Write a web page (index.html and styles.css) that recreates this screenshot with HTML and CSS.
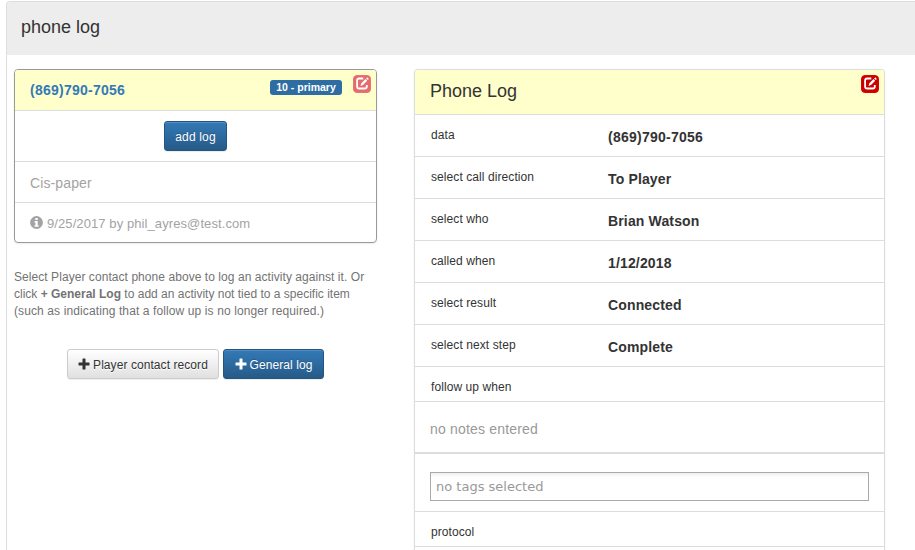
FILE: index.html
```html
<!DOCTYPE html>
<html lang="en">
<head>
<meta charset="utf-8">
<title>phone log</title>
<link rel="stylesheet" href="styles.css">
</head>
<body>
<svg class="defs" width="0" height="0" aria-hidden="true">
  <symbol id="edit" viewBox="0 0 13 13">
    <path d="M7.3 1.5H3.2Q1.1 1.5 1.1 3.6V9.4Q1.1 11.5 3.2 11.5H8.7Q10.8 11.5 10.8 9.4V8" fill="none" stroke="#fff" stroke-width="1.8"/>
    <path d="M4.5 9 5.3 6.3 9.5 2 11.2 3.7 7 8ZM10.1 1.4 10.8.7Q11.3.3 11.8.8L12.4 1.4Q12.8 1.9 12.4 2.4L11.8 3.1Z" fill="#fff"/>
  </symbol>
  <symbol id="plus" viewBox="0 0 12 12">
    <path d="M4.5 1Q4.5.5 5 .5H7Q7.5.5 7.5 1V4.5H11Q11.5 4.5 11.5 5V7Q11.5 7.5 11 7.5H7.5V11Q7.5 11.5 7 11.5H5Q4.5 11.5 4.5 11V7.5H1Q.5 7.5.5 7V5Q.5 4.5 1 4.5H4.5Z" fill="currentColor"/>
  </symbol>
</svg>
<section class="page-panel">
  <header class="page-head"><h1>phone log</h1></header>
  <div class="columns">
    <div class="left">
      <article class="card contact">
        <div class="card-head">
          <a class="phone">(869)790-7056</a>
          <span class="rank">10 - primary</span>
          <span class="edit faded"><svg width="13" height="13"><use href="#edit"/></svg></span>
        </div>
        <div class="item action"><button class="btn primary add"><span>add log</span></button></div>
        <div class="item source"><span>Cis-paper</span></div>
        <div class="item meta">
          <svg width="13" height="13" viewBox="0 0 13 13"><circle cx="6.5" cy="6.5" r="6.4" fill="#a3a3a3"/><path d="M5.3 2H7.7V4H5.3ZM4.5 5H7.700V9.300H8.600V10.700H4.500V9.300H5.400V6.400H4.500Z" fill="#fff"/></svg>
          <span>9/25/2017 by phil_ayres@test.com</span>
        </div>
      </article>
      <p class="help"><span class="l1">Select Player contact phone above to log an activity against it. Or</span><br><span class="l2">click <b>+ General Log</b> to add an activity not tied to a specific item</span><br><span class="l3">(such as indicating that a follow up is no longer required.)</span></p>
      <div class="buttons">
        <button class="btn plain record"><svg width="12" height="12"><use href="#plus"/></svg><span>Player contact record</span></button>
        <button class="btn primary general"><svg width="12" height="12"><use href="#plus"/></svg><span>General log</span></button>
      </div>
    </div>
    <article class="card log">
      <div class="card-head">
        <h2>Phone Log</h2>
        <span class="edit"><svg width="13" height="13"><use href="#edit"/></svg></span>
      </div>
      <div class="row"><span class="key">data</span><b class="number">(869)790-7056</b></div>
      <div class="row"><span class="key">select call direction</span><b>To Player</b></div>
      <div class="row"><span class="key">select who</span><b>Brian Watson</b></div>
      <div class="row"><span class="key">called when</span><b>1/12/2018</b></div>
      <div class="row"><span class="key">select result</span><b>Connected</b></div>
      <div class="row"><span class="key">select next step</span><b>Complete</b></div>
      <div class="row short"><span class="key">follow up when</span></div>
      <div class="notes"><span>no notes entered</span></div>
      <div class="tags"><div class="tag-box"><span>no tags selected</span></div></div>
      <div class="row short"><span class="key">protocol</span></div>
    </article>
  </div>
</section>
</body>
</html>
```
FILE: styles.css
```css
* { box-sizing: border-box; }
body {
  margin: 0;
  height: 550px;
  overflow: hidden;
  background: #fff;
  color: #333;
  font: 14px/20px "Liberation Sans", Arial, sans-serif;
}
.defs { display: block; }
.page-panel {
  margin: 1px 0 0 6px;
  height: 549px;
  border: 1px solid #ddd;
  border-width: 1px 0 0 1px;
  border-radius: 4px 0 0;
}
.page-head { height: 53px; padding: 15px 14px; background: #ededed; border-radius: 3px 0 0; }
h1, h2 { margin: 0; font-size: 18px; line-height: 20px; font-weight: 400; }
.columns { display: flex; align-items: flex-start; padding: 14px 0 0 7px; }
.left { width: 363px; margin-right: 37px; }
.card {
  border: 1px solid #ddd;
  border-radius: 4px;
  box-shadow: 0 1px 2px rgba(0, 0, 0, .08);
}
.card-head {
  display: flex;
  align-items: flex-start;
  background: #ffc;
  border-bottom: 1px solid #ddd;
  border-radius: 3px 3px 0 0;
}
.contact { height: 174px; border-color: #999; }
.contact .card-head { height: 41px; padding: 5px 5px 0 15px; }
.phone { margin-top: 5px; color: #337ab7; font-weight: 700; letter-spacing: .25px; }
.rank {
  width: 72px;
  height: 15px;
  margin: 5px 11px 0 auto;
  border-radius: 3px;
  background: #2e6da4;
  color: #fff;
  font-size: 10.5px;
  font-weight: 700;
  line-height: 15px;
  text-align: center;
}
.edit {
  display: flex;
  align-items: center;
  justify-content: center;
  width: 18px;
  height: 18px;
  border: 1px solid #e00000;
  border-radius: 4px;
  background: #c90000;
}
.edit svg { margin-bottom: 1px; }
.edit.faded { background: #e46c6c; border-color: #e97272; }
.item { display: flex; align-items: center; height: 41px; padding: 0 15px; border-bottom: 1px solid #ddd; color: #a3a3a3; }
.item.action { height: 51px; justify-content: center; }
.item.source { padding-top: 2px; letter-spacing: .12px; }
.item.meta { height: 39px; border: 0; gap: 4px; font-size: 13px; letter-spacing: .09px; }
.item.meta span { padding-top: 2px; }
.btn {
  display: flex;
  align-items: center;
  justify-content: center;
  gap: 4px;
  height: 30px;
  padding: 0;
  border: 1px solid #245580;
  border-radius: 3px;
  font: 12px/18px "Liberation Sans", Arial, sans-serif;
  box-shadow: inset 0 1px 0 rgba(255, 255, 255, .15), 0 1px 1px rgba(0, 0, 0, .075);
}
.btn span { padding-top: 2px; letter-spacing: .07px; }
.btn.primary { color: #fff; background: linear-gradient(#337ab7, #265a88); text-shadow: 0 -1px 0 rgba(0, 0, 0, .2); }
.btn.plain { color: #333; background: linear-gradient(#fff, #e0e0e0); border-color: #ccc; text-shadow: 0 1px 0 #fff; }
.btn.record, .btn.general { gap: 3px; }
.add { width: 63px; }
.add span { letter-spacing: .15px; }
.help { margin: 26px 0 29px; color: #737373; font-size: 12px; line-height: 17px; white-space: nowrap; }
.l1 { letter-spacing: .06px; }
.l2 { letter-spacing: -.02px; }
.l3 { letter-spacing: .11px; }
.l2 { letter-spacing: 0; }
.buttons { display: flex; gap: 4px; padding-left: 53px; }
.record { width: 152px; }
.general { width: 101px; }
.log { width: 471px; height: 481px; border-bottom: 0; border-radius: 4px 4px 0 0; }
.log .card-head { height: 45px; padding: 5px 5px 0 15px; justify-content: space-between; }
.log h2 { margin-top: 6px; }
.row { display: flex; height: 42px; padding: 11px 16px 0; border-bottom: 1px solid #ddd; }
.row b { margin-top: 1px; letter-spacing: .15px; }
.row .number { letter-spacing: .25px; }
.key { width: 177px; font-size: 12px; line-height: 18px; letter-spacing: .08px; }
.row.short { height: 35px; }
.notes { height: 52px; padding: 17px 15px 0; border-bottom: 2px solid #ddd; color: #999; letter-spacing: .18px; }
.tags { height: 58px; padding: 18px 15px 0; border-bottom: 1px solid #ddd; }
.tag-box {
  height: 29px;
  padding: 0 5px;
  border: 1px solid #aaa;
  background: linear-gradient(#eee, #fff 4px);
  color: #999;
  font: 13px/27px "DejaVu Sans", sans-serif;
}
```
